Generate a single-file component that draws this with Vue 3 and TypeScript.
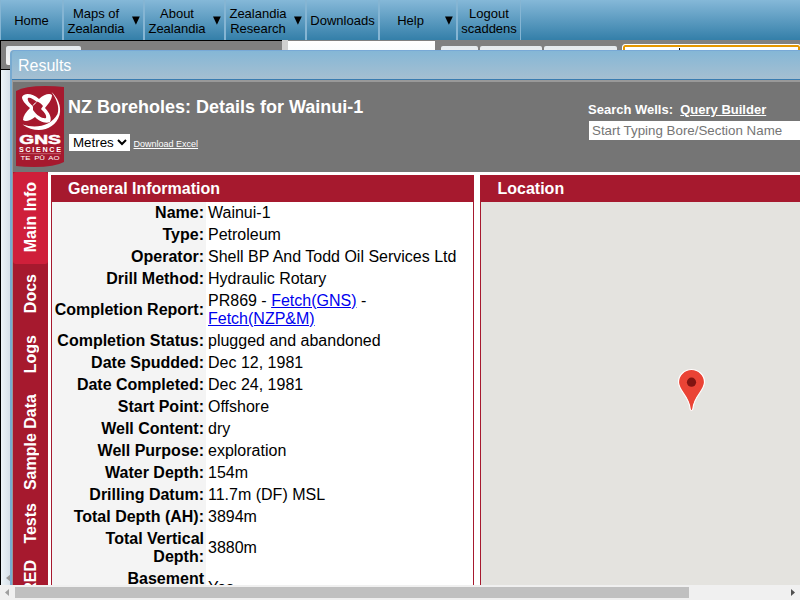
<script setup lang="ts">
interface MenuItem {
  lines: string[]
  width: number
  arrow?: boolean
}

interface Detail {
  label: string
  value?: string
}

const menu: MenuItem[] = [
  { lines: ['Home'], width: 63 },
  { lines: ['Maps of', 'Zealandia'], width: 81, arrow: true },
  { lines: ['About', 'Zealandia'], width: 81, arrow: true },
  { lines: ['Zealandia', 'Research'], width: 81, arrow: true },
  { lines: ['Downloads'], width: 73 },
  { lines: ['Help'], width: 78, arrow: true },
  { lines: ['Logout', 'scaddens'], width: 63 },
]

const tabs = [
  { name: 'Main Info', height: 92 },
  { name: 'Docs', height: 60 },
  { name: 'Logs', height: 61 },
  { name: 'Sample Data', height: 114 },
  { name: 'Tests', height: 49 },
  { name: 'INFRARED', height: 110 },
]

const details: Detail[] = [
  { label: 'Name:', value: 'Wainui-1' },
  { label: 'Type:', value: 'Petroleum' },
  { label: 'Operator:', value: 'Shell BP And Todd Oil Services Ltd' },
  { label: 'Drill Method:', value: 'Hydraulic Rotary' },
  { label: 'Completion Report:' },
  { label: 'Completion Status:', value: 'plugged and abandoned' },
  { label: 'Date Spudded:', value: 'Dec 12, 1981' },
  { label: 'Date Completed:', value: 'Dec 24, 1981' },
  { label: 'Start Point:', value: 'Offshore' },
  { label: 'Well Content:', value: 'dry' },
  { label: 'Well Purpose:', value: 'exploration' },
  { label: 'Water Depth:', value: '154m' },
  { label: 'Drilling Datum:', value: '11.7m (DF) MSL' },
  { label: 'Total Depth (AH):', value: '3894m' },
  { label: 'Total Vertical Depth:', value: '3880m' },
  { label: 'Basement Reached:', value: 'Yes' },
]
</script>

<template>
  <div class="page">
    <nav class="menu">
      <a v-for="item in menu" :key="item.lines.join(' ')" class="menu-item" :style="{ width: item.width + 'px' }">
        <span class="menu-label"><span v-for="line in item.lines" :key="line">{{ line }}</span></span>
        <svg v-if="item.arrow" class="menu-arrow" width="8" height="9" viewBox="0 0 8 9"><path d="M0 0.5H7.8L3.9 8.8Z" /></svg>
      </a>
    </nav>

    <div class="backdrop">
      <div class="toolbar">
        <div class="tools-left"><span class="tool wide"></span></div>
        <div class="gutter"></div>
        <div class="blank"></div>
        <div class="tools-right">
          <span class="tool b1"></span><span class="tool b2"></span><span class="tool b3"></span>
          <span class="field"><i class="caret"></i></span>
        </div>
      </div>
      <div class="canvas">
        <svg class="inner-arrow" width="5" height="8" viewBox="0 0 5 8"><path d="M5 0V8L0 4Z" /></svg>
      </div>
    </div>

    <section class="window">
      <div class="window-title">Results</div>
      <div class="window-body">
        <header class="header">
          <svg class="logo" width="48" height="82" viewBox="0 0 48 82">
            <path d="M0 5Q9 0 29 0Q40 0 48 1V76Q39 81 18 81Q8 81 0 80Z" fill="#a6192e" />
            <path fill="#fff" fill-rule="evenodd" d="M6 11C9 6 17 8 23 13C28 8 34 7 36 9C36 14 32 18 29 22C34 27 36 33 34 36C29 38 23 35 19 31C14 35 9 36 7 34C7 30 10 26 14 22C9 18 6 14 6 11ZM12 12C11 14 13 17 17 20L21 16C17 13 14 11 12 12ZM17 24C21 30 27 33 30 32C31 29 28 26 25 23L27 20C23 15 20 15 17 19Z" />
            <path d="M21 16L25 20M17 20L25 28" stroke="#a6192e" stroke-width="1.2" />
            <path d="M35.5 6C41 11 46 20 43.5 29C39 44 21 49 6.5 38.5C20 43 35 40 41.5 28C44 21 40 12 35.5 6Z" fill="#fff" />
            <g fill="#fff" font-family="Liberation Sans, Arial, sans-serif">
              <text x="3.3" y="58.3" font-size="11.9" font-weight="700" textLength="41.5" lengthAdjust="spacingAndGlyphs" stroke="#fff" stroke-width=".5">GNS</text>
              <text x="3" y="66" font-size="7.2" font-weight="700" textLength="42" lengthAdjust="spacing">SCIENCE</text>
              <rect x="3" y="67.5" width="42" height=".6" opacity=".5" />
              <text x="4.5" y="73.8" font-size="5.3" textLength="39" lengthAdjust="spacingAndGlyphs" word-spacing="1">TE PŪ AO</text>
            </g>
          </svg>
          <div class="heading">
            <h1>NZ Boreholes: Details for Wainui-1</h1>
            <div class="units">
              <span class="select">Metres
                <svg width="10" height="7" viewBox="0 0 10 7"><path d="M1 1L5 5L9 1" fill="none" stroke="#000" stroke-width="2" /></svg>
              </span>
              <a class="excel">Download Excel</a>
            </div>
          </div>
          <div class="search">
            <div class="search-label">Search Wells:&nbsp; <a>Query Builder</a></div>
            <input class="search-input" type="text" placeholder="Start Typing Bore/Section Name" />
          </div>
        </header>
        <div class="content">
          <aside class="tabs">
            <div v-for="(tab, i) in tabs" :key="tab.name" class="tab" :class="{ active: i === 0, last: i === tabs.length - 1 }" :style="{ height: tab.height + 'px' }">
              <span>{{ tab.name }}</span>
            </div>
          </aside>
          <section class="panel general">
            <h2>General Information</h2>
            <table>
              <tbody>
                <tr v-for="row in details" :key="row.label">
                  <th>{{ row.label }}</th>
                  <td v-if="row.value">{{ row.value }}</td>
                  <td v-else>PR869 - <a>Fetch(GNS)</a> -<br /><a>Fetch(NZP&amp;M)</a></td>
                </tr>
              </tbody>
            </table>
          </section>
          <section class="panel location">
            <h2>Location</h2>
            <div class="map">
              <svg class="pin" width="29" height="44" viewBox="0 0 29 44">
                <path d="M14.5 1.5C7.3 1.5 1.5 7.2 1.5 14.2C1.5 22.7 12.2 28 13.2 41Q13.4 42.5 14.5 42.5Q15.6 42.5 15.8 41C16.8 28 27.5 22.7 27.5 14.2C27.5 7.2 21.7 1.5 14.5 1.5Z" fill="#ea4335" stroke="#fff" stroke-width="1.2" />
                <circle cx="14.5" cy="14.2" r="4.6" fill="#811411" />
              </svg>
            </div>
          </section>
        </div>
      </div>
    </section>

    <div class="scrollbar">
      <svg width="15" height="15" viewBox="0 0 15 15"><path d="M9 4V11L5 7.5Z" fill="#a0a0a0" /></svg>
      <div class="track"><div class="thumb"></div></div>
      <svg width="15" height="15" viewBox="0 0 15 15"><path d="M6 4V11L10 7.5Z" fill="#505050" /></svg>
    </div>
  </div>
</template>

<style>
body {
  overflow: hidden;
}
</style>

<style scoped>
* {
  box-sizing: border-box;
}
.page {
  position: relative;
  display: flex;
  flex-direction: column;
  width: 800px;
  height: 600px;
  overflow: hidden;
  background: #fff;
  font: 16px/18px "Liberation Sans", Arial, sans-serif;
  color: #000;
}
.menu {
  display: flex;
  flex: none;
  height: 40px;
  padding-left: 1px;
  background: linear-gradient(#85b8d8, #347fa9);
  box-shadow: inset 1px 0 #85b5d3;
}
.menu-item {
  display: flex;
  align-items: center;
  flex: none;
  padding-top: 1px;
  border-right: 2px solid #85b5d3;
  font-size: 13px;
  line-height: 15px;
}
.menu-item:last-child {
  border-right-width: 1px;
}
.menu-label {
  display: flex;
  flex: 1;
  flex-direction: column;
  align-items: center;
}
.menu-arrow {
  margin: 0 3.5px 0 3.5px;
}
.backdrop {
  display: flex;
  flex-direction: column;
  flex: 1;
  border-left: 1px solid #000;
}
.toolbar {
  display: flex;
  height: 30px;
  flex: none;
  background: #808080;
}
.tools-left {
  flex: none;
  width: 281px;
  padding: 5px;
  border-top: 1px solid #000;
  border-bottom: 1px solid #000;
}
.gutter {
  flex: none;
  width: 6px;
  background: #d0d0d0;
}
.blank {
  flex: none;
  width: 147px;
  border-top: 1px solid #808080;
  background: linear-gradient(#fff, #edf4f8);
}
.tools-right {
  display: flex;
  flex: none;
  width: 366px;
  padding: 6px 0 0 6px;
}
.tool {
  display: block;
  flex: none;
  height: 19px;
  margin-right: 2px;
  border-radius: 2px;
  background: linear-gradient(#e5eaee, #f5f5f5);
}
.wide {
  width: 75px;
}
.b1 {
  width: 37px;
}
.b2 {
  width: 62px;
}
.b3 {
  width: 73px;
}
.field {
  flex: none;
  width: 179px;
  height: 24px;
  margin: -2px 0 0 3px;
  padding: 3px 0 0 56px;
  border: 1px solid #fff;
  border-radius: 3px;
  background: #fff;
  box-shadow: inset 0 0 0 2px #e59700;
}
.caret {
  display: block;
  width: 1px;
  height: 14px;
  background: #000;
}
.canvas {
  display: flex;
  flex: 1;
  align-items: flex-end;
  padding: 0 0 18px 5px;
  background: linear-gradient(90deg, #edf4f8, #d5dfe8 10px);
}
.inner-arrow {
  fill: #999;
}
.window {
  position: absolute;
  left: 10px;
  top: 50px;
  width: 1060px;
  height: 535px;
  overflow: hidden;
  border-top: 1px solid #78a9d6;
  border-left: 2px solid #78aad0;
  border-radius: 4px 0 0 0;
  background: #999;
}
.window-title {
  height: 29px;
  padding: 6px 0 0 6px;
  border-bottom: 1px solid #3a7cb0;
  background: linear-gradient(#85b7d6, #a5bfd1);
  color: #fff;
}
.window-body {
  padding: 2px 0 0 1px;
}
.header {
  display: flex;
  height: 90px;
  padding: 4px 0 0 3px;
  background: #757575;
  color: #fff;
}
.logo {
  flex: none;
}
.heading {
  width: 524px;
  padding: 11px 0 0 4px;
}
h1 {
  margin: 0;
  font-size: 18px;
  line-height: 20px;
}
.units {
  display: flex;
  align-items: center;
  margin-top: 17px;
}
.select {
  display: flex;
  align-items: center;
  justify-content: space-between;
  width: 61px;
  height: 17px;
  margin-left: 1px;
  padding: 0 3px 0 4px;
  background: #fff;
  color: #000;
  font-size: 13.33px;
}
.excel {
  margin: 2px 0 0 3.5px;
  font-size: 9px;
  line-height: 12px;
  text-decoration: underline;
}
.search {
  padding-top: 16px;
}
.search-label {
  font-size: 13px;
  font-weight: 700;
  line-height: 15px;
}
.search-label a {
  text-decoration: underline;
}
.search-input {
  display: block;
  width: 250px;
  height: 19px;
  margin: 4px 0 0 1px;
  padding: 0 3px;
  border: 0;
  font: 13.33px "Liberation Sans", Arial, sans-serif;
}
.search-input::placeholder {
  color: #757575;
}
.content {
  display: flex;
  height: 413px;
  background: #fff;
}
.tabs {
  width: 35px;
  flex: none;
  background: #a6192e;
}
.tab {
  display: flex;
  align-items: center;
  justify-content: center;
  color: #fff;
  font-weight: 700;
}
.tab span {
  writing-mode: vertical-rl;
  transform: rotate(180deg);
}
.tab.active {
  padding-bottom: 2px;
  border-radius: 3px;
  background: #cf1f3a;
}
.tab.last {
  align-items: flex-start;
  padding-top: 12px;
}
.panel {
  flex: none;
  height: 460px;
  margin-top: 3px;
  border: 1px solid #a6192e;
}
.general {
  width: 423px;
  margin-left: 3px;
}
.location {
  width: 560px;
  margin-left: 6px;
}
h2 {
  height: 26px;
  margin: 0;
  padding: 3px 16px;
  background: #a6192e;
  color: #fff;
  font-size: 16px;
  line-height: 19px;
}
.location h2 {
  padding-left: 16.5px;
}
table {
  width: 421px;
  border-collapse: collapse;
  table-layout: fixed;
}
th,
td {
  padding: 2px;
  text-align: left;
  vertical-align: middle;
}
th {
  width: 154px;
  background: #f4f4f4;
  text-align: right;
}
td a {
  color: #00e;
  text-decoration: underline;
}
.map {
  height: 432px;
  padding: 166px 0 0 196px;
  background: #e4e3df;
}
.scrollbar {
  position: absolute;
  left: 0;
  bottom: 0;
  display: flex;
  width: 800px;
  height: 15px;
  background: #f0f0f0;
}
.track {
  flex: 1;
  padding: 2px 0;
}
.thumb {
  width: 674px;
  height: 11px;
  background: #c0c0c0;
}
</style>
